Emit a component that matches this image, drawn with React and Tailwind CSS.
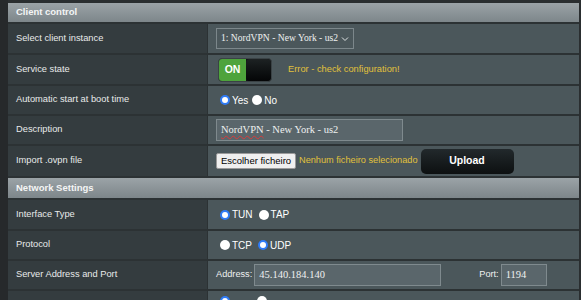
import React from "react";

const sans = { fontFamily: '"Liberation Sans", Arial, sans-serif' };
const serif = { fontFamily: '"Liberation Serif", "Times New Roman", serif' };

const Radio = ({ checked, label }) => (
  <span className="flex items-center gap-[2px] text-[10px] text-white">
    {checked ? (
      <span className="w-[10px] h-[10px] rounded-full bg-[#2f7bf6] flex items-center justify-center">
        <span className="w-[6px] h-[6px] rounded-full bg-white" />
      </span>
    ) : (
      <span className="w-[10px] h-[10px] rounded-full bg-white" />
    )}
    {label && <span>{label}</span>}
  </span>
);

const Row = ({ label, h, children }) => (
  <div className={`flex shrink-0 border-t-2 border-[#2c3234] ${h}`}>
    <div className="w-[200px] shrink-0 bg-[#343c3f] flex items-center pl-[8px] text-[9.3px] text-[#e8eaea] border-r border-[#2c3234]">
      {label}
    </div>
    <div className="flex-1 bg-[#4b575b] flex items-center pl-[8px] whitespace-nowrap">{children}</div>
  </div>
);

const Header = ({ title, h }) => (
  <div
    className={`${h} shrink-0 bg-gradient-to-b from-[#9ba3a7] to-[#7d868a] flex items-center pl-[8px] text-[9.5px] font-bold text-[#f4f5f5]`}
  >
    {title}
  </div>
);

export default function App() {
  return (
    <div className="w-[581px] h-[300px] overflow-hidden bg-[#2a2e30] flex" style={sans}>
      <div className="w-[8px] shrink-0 bg-[#26292b]" />
      <div className="w-[571px] pt-[3px] flex flex-col">
        <Header title="Client control" h="h-[19px]" />
        <Row label="Select client instance" h="h-[31px]">
          <div
            className="h-[21px] w-[138px] border border-[#7c878b] bg-[#4b575b] flex items-center pl-[4px] pr-[4px] text-[9.6px] text-[#eef0f0] justify-between"
            style={serif}
          >
            <span>1: NordVPN - New York - us2</span>
            <svg width="8" height="6" viewBox="0 0 8 6" className="shrink-0 ml-[2px]">
              <path d="M1 1.5 L4 4.5 L7 1.5" stroke="#dfe3e4" strokeWidth="1" fill="none" />
            </svg>
          </div>
        </Row>
        <Row label="Service state" h="h-[31px]">
          <div className="ml-[2px] flex h-[24px] w-[54px] rounded-[4px] overflow-hidden bg-[#0f1213] border border-[#3a4245]">
            <div className="w-[27px] bg-[#4ea33c] flex items-center justify-center text-[10.5px] font-bold text-white">
              ON
            </div>
            <div className="flex-1 rounded-[4px] bg-gradient-to-b from-[#1d2223] to-[#050607]" />
          </div>
          <span className="ml-[16px] text-[9.3px] text-[#e1c13c]">Error - check configuration!</span>
        </Row>
        <Row label="Automatic start at boot time" h="h-[30px]">
          <div className="flex gap-[4px] pl-[4px]">
            <Radio checked label="Yes" />
            <Radio label="No" />
          </div>
        </Row>
        <Row label="Description" h="h-[30px]">
          <div
            className="h-[22px] w-[187px] border border-[#7f8a8e] bg-[#5a666b] flex items-center pl-[4px] text-[10.5px] text-[#eef0f0]"
            style={serif}
          >
            <span className="underline decoration-wavy decoration-[#d93a3a] decoration-1 underline-offset-2">
              NordVPN
            </span>
            <span>&nbsp;- New York - us2</span>
          </div>
        </Row>
        <Row label="Import .ovpn file" h="h-[32px]">
          <div className="h-[16px] w-[80px] bg-[#efefef] border border-[#9a9a9a] rounded-[2px] flex items-center justify-center text-[9.5px] text-black">
            Escolher ficheiro
          </div>
          <span className="ml-[3px] text-[9.2px] text-[#e1c13c]">Nenhum ficheiro selecionado</span>
          <div className="ml-[3px] h-[25px] w-[93px] rounded-[5px] bg-gradient-to-b from-[#22292c] to-[#0d1011] flex items-center justify-center text-[10.5px] font-bold text-white">
            Upload
          </div>
        </Row>
        <div className="shrink-0 border-t-2 border-[#2c3234]">
          <Header title="Network Settings" h="h-[20px]" />
        </div>
        <Row label="Interface Type" h="h-[31px]">
          <div className="flex gap-[6px] pl-[4px]">
            <Radio checked label="TUN" />
            <Radio label="TAP" />
          </div>
        </Row>
        <Row label="Protocol" h="h-[30px]">
          <div className="flex gap-[6px] pl-[4px]">
            <Radio label="TCP" />
            <Radio checked label="UDP" />
          </div>
        </Row>
        <Row label="Server Address and Port" h="h-[30px]">
          <span className="text-[9.2px] text-[#eef0f0]">Address:</span>
          <div
            className="ml-[2px] h-[22px] w-[187px] border border-[#7f8a8e] bg-[#5a666b] flex items-center pl-[4px] text-[10.5px] text-[#eef0f0]"
            style={serif}
          >
            45.140.184.140
          </div>
          <span className="ml-[38px] text-[9.2px] text-[#eef0f0]">Port:</span>
          <div
            className="ml-[2px] h-[22px] w-[46px] border border-[#7f8a8e] bg-[#5a666b] flex items-center pl-[4px] text-[10.5px] text-[#eef0f0]"
            style={serif}
          >
            1194
          </div>
        </Row>
        <Row label="" h="h-[30px]">
          <div className="self-start mt-[5px] flex gap-[27px] pl-[4px]">
            <Radio checked label="" />
            <Radio label="" />
          </div>
        </Row>
      </div>
      <div className="w-[2px] shrink-0 bg-[#2a2e30]" />
    </div>
  );
}
